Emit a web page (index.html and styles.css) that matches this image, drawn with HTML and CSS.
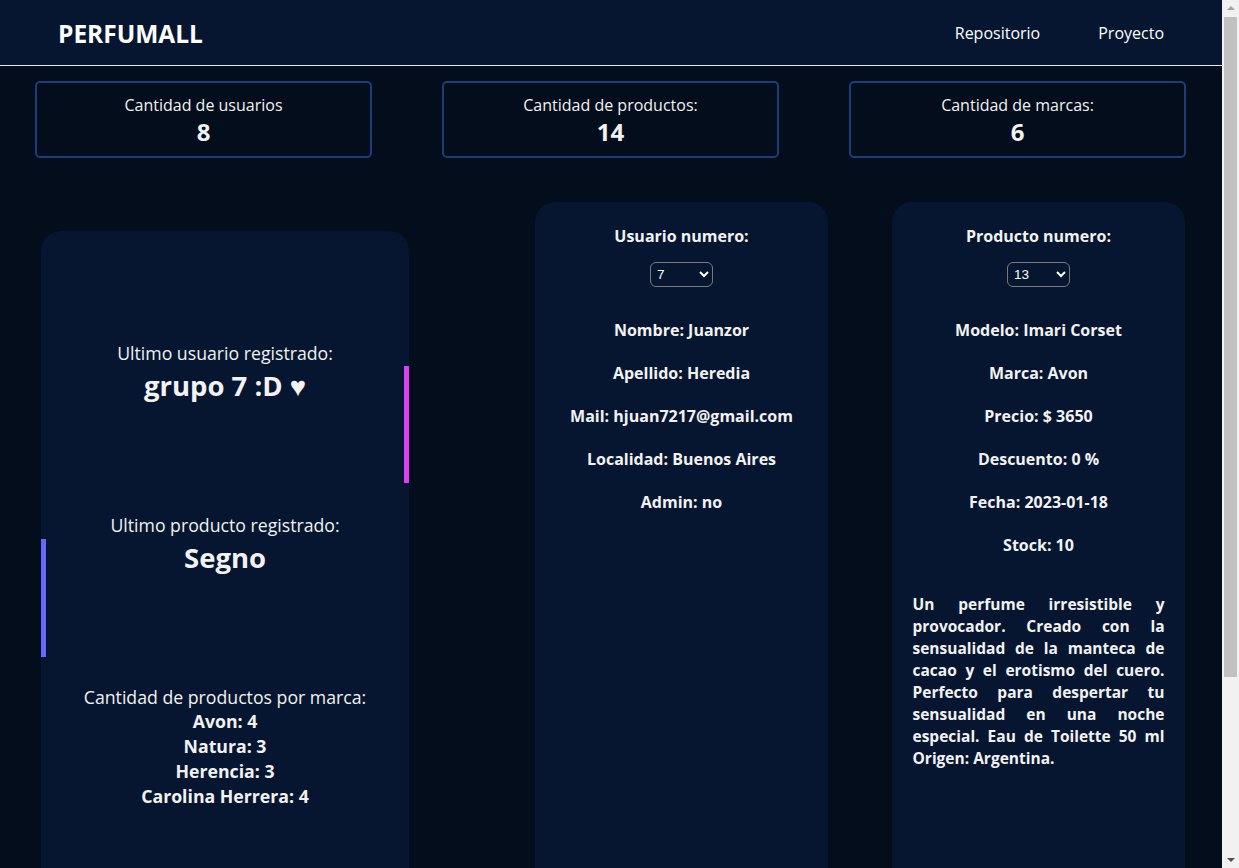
FILE: index.html
```html
<!DOCTYPE html>
<html lang="es">
<head>
<meta charset="utf-8">
<title>PERFUMALL</title>
<link rel="stylesheet" href="styles.css">
</head>
<body>
<div class="frame">
<header class="topbar">
  <div class="logo">PERFUMALL</div>
  <nav class="nav">
    <a class="nav-link" href="#">Repositorio</a>
    <a class="nav-link" href="#">Proyecto</a>
  </nav>
</header>
<main class="page">
  <section class="stats">
    <div class="stat">
      <div class="stat-title">Cantidad de usuarios</div>
      <div class="stat-value">8</div>
    </div>
    <div class="stat">
      <div class="stat-title">Cantidad de productos:</div>
      <div class="stat-value">14</div>
    </div>
    <div class="stat">
      <div class="stat-title">Cantidad de marcas:</div>
      <div class="stat-value">6</div>
    </div>
  </section>
  <section class="panels">
    <div class="card card-last">
      <div class="last-block last-user">
        <div class="last-title">Ultimo usuario registrado:</div>
        <div class="last-value">grupo 7 :D ♥</div>
      </div>
      <div class="last-block last-product">
        <div class="last-title">Ultimo producto registrado:</div>
        <div class="last-value">Segno</div>
      </div>
      <div class="brands">
        <div class="last-title">Cantidad de productos por marca:</div>
        <div class="brand">Avon: 4</div>
        <div class="brand">Natura: 3</div>
        <div class="brand">Herencia: 3</div>
        <div class="brand">Carolina Herrera: 4</div>
      </div>
    </div>
    <div class="card card-detail card-user">
      <div class="detail-title">Usuario numero:</div>
      <select class="picker">
        <option>7</option>
      </select>
      <div class="detail-list">
        <div class="detail-item">Nombre: Juanzor</div>
        <div class="detail-item">Apellido: Heredia</div>
        <div class="detail-item">Mail: hjuan7217@gmail.com</div>
        <div class="detail-item">Localidad: Buenos Aires</div>
        <div class="detail-item">Admin: no</div>
      </div>
    </div>
    <div class="card card-detail card-product">
      <div class="detail-title">Producto numero:</div>
      <select class="picker">
        <option>13</option>
      </select>
      <div class="detail-list">
        <div class="detail-item">Modelo: Imari Corset</div>
        <div class="detail-item">Marca: Avon</div>
        <div class="detail-item">Precio: $ 3650</div>
        <div class="detail-item">Descuento: 0 %</div>
        <div class="detail-item">Fecha: 2023-01-18</div>
        <div class="detail-item">Stock: 10</div>
      </div>
      <p class="description">Un perfume irresistible y provocador. Creado con la sensualidad de la manteca de cacao y el erotismo del cuero. Perfecto para despertar tu sensualidad en una noche especial. Eau de Toilette 50 ml Origen: Argentina.</p>
    </div>
  </section>
</main>
</div>
<div class="scrollbar" aria-hidden="true">
  <div class="sb-arrow sb-up"></div>
  <div class="sb-thumb"></div>
  <div class="sb-arrow sb-down"></div>
</div>
</body>
</html>
```
FILE: styles.css
```css
* { box-sizing: border-box; }
html, body {
  margin: 0;
  padding: 0;
}
body {
  background: #030d1b;
  color: #f2f2f2;
  font-family: "Open Sans", "Noto Sans", sans-serif;
  overflow: hidden;
}
.frame {
  width: 1222px;
}
.topbar {
  height: 66px;
  background: #061630;
  border-bottom: 1px solid #e8e8e8;
  display: flex;
  align-items: center;
  justify-content: space-between;
  padding: 0 58px 0 58px;
}
.logo {
  font-size: 24.5px;
  font-weight: 700;
  color: #ffffff;
  margin-top: 2px;
}
.nav {
  display: flex;
  gap: 58px;
}
.nav-link {
  color: #ffffff;
  text-decoration: none;
  font-size: 16px;
}
.stats {
  display: flex;
  gap: 70px;
  padding: 15px 35px 0 35px;
}
.stat {
  width: 337px;
  height: 77px;
  border: 2px solid #1b3d7a;
  border-radius: 5px;
  text-align: center;
  padding-top: 12px;
}
.stat-title {
  font-size: 16px;
  line-height: 20px;
}
.stat-value {
  font-size: 24px;
  font-weight: 700;
  line-height: 34px;
}
.panels {
  display: flex;
  align-items: flex-start;
  margin-top: 44px;
  padding-left: 41px;
}
.card {
  background: #061630;
  border-radius: 20px;
  height: 720px;
}
.card-last {
  width: 368px;
  margin-top: 29px;
  padding-top: 110px;
}
.card-user {
  width: 293px;
  margin-left: 126px;
}
.card-product {
  width: 293px;
  margin-left: 64px;
}
.last-block {
  position: relative;
  text-align: center;
  height: 172px;
}
.last-title {
  font-size: 17.7px;
  line-height: 24px;
}
.last-value {
  font-size: 27.5px;
  font-weight: 700;
  line-height: 42px;
}
.last-user::after {
  content: "";
  position: absolute;
  right: 0;
  top: 25px;
  width: 5px;
  height: 117px;
  background: #dd3ff2;
}
.last-product::after {
  content: "";
  position: absolute;
  left: 0;
  top: 26px;
  width: 5px;
  height: 118px;
  background: #6567ff;
}
.brands {
  text-align: center;
}
.brand {
  font-size: 17.7px;
  font-weight: 700;
  line-height: 25px;
}
.card-detail {
  padding: 24px 21px 0 21px;
  display: flex;
  flex-direction: column;
  align-items: center;
}
.detail-title {
  font-size: 16px;
  font-weight: 700;
  line-height: 20px;
}
.picker {
  margin-top: 16px;
  width: 63px;
  height: 25px;
  background: #061630;
  color: #ffffff;
  color-scheme: dark;
  border: 1px solid #7a7a7a;
  border-radius: 6px;
  font-family: "Liberation Sans", Arial, sans-serif;
  font-size: 13.5px;
  padding: 0 2px;
}
.detail-list {
  margin-top: 33px;
  display: flex;
  flex-direction: column;
  align-items: center;
  gap: 23px;
}
.detail-item {
  font-size: 16px;
  font-weight: 700;
  line-height: 20px;
  white-space: nowrap;
}
.description {
  margin: 38px 0 0 0;
  font-size: 15.5px;
  font-weight: 700;
  line-height: 22px;
  text-align: justify;
  width: 252px;
}
.scrollbar {
  position: fixed;
  top: 0;
  right: 0;
  width: 17px;
  height: 100vh;
  background: #f1f1f1;
  display: flex;
  flex-direction: column;
  align-items: center;
}
.sb-arrow {
  width: 0;
  height: 0;
  border-left: 4px solid transparent;
  border-right: 4px solid transparent;
}
.sb-up {
  margin-top: 6px;
  border-bottom: 4px solid #a3a3a3;
}
.sb-thumb {
  margin-top: 7px;
  width: 13px;
  height: 660px;
  background: #c1c1c1;
}
.sb-down {
  margin-top: auto;
  margin-bottom: 6px;
  border-top: 4px solid #505050;
}
```
